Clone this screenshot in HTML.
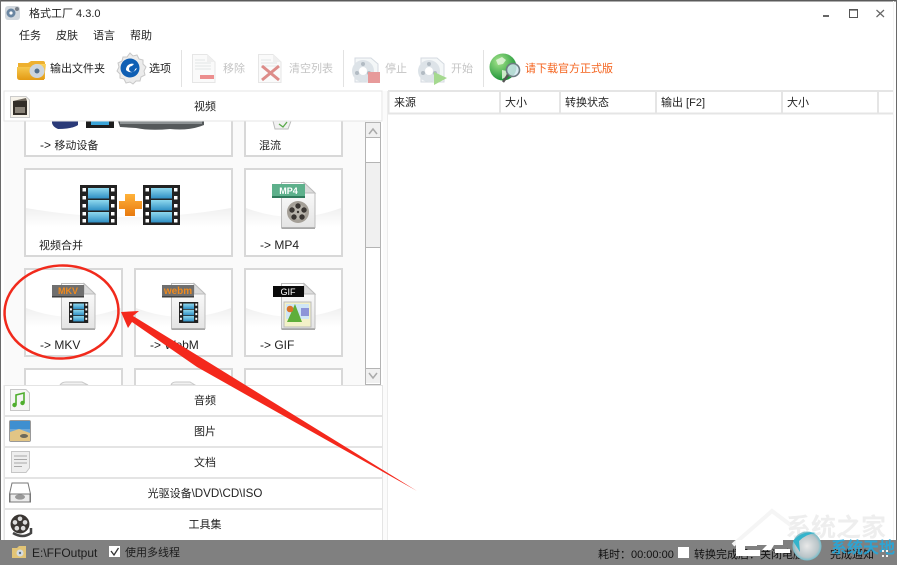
<!DOCTYPE html>
<html lang="zh-CN">
<head>
<meta charset="utf-8">
<title>格式工厂 4.3.0</title>
<style>
html,body{margin:0;padding:0;background:#fff}
#app{position:relative;width:897px;height:565px;overflow:hidden;background:#fff;font:11px/18px "Liberation Sans","Noto Sans CJK SC",sans-serif;color:#222}
#app>div.t{position:absolute;white-space:nowrap;margin-top:1px}
.c{transform:translateX(-50%)}
.g{color:#c4c4c4}
.l{font-size:12px}
svg{position:absolute;left:0;top:0}
</style>
</head>
<body>
<div id="app">
<svg width="897" height="565" viewBox="0 0 897 565">
<defs>
<linearGradient id="sw" x1="0" y1="0" x2="0" y2="1"><stop offset="0" stop-color="#f0f0f0"/><stop offset=".8" stop-color="#fff"/></linearGradient>
<linearGradient id="fb" x1="0" y1="0" x2="0" y2="1"><stop offset="0" stop-color="#8fd8ee"/><stop offset="1" stop-color="#2f8fc4"/></linearGradient>
<linearGradient id="pl" x1="0" y1="0" x2="0" y2="1"><stop offset="0" stop-color="#ffb23a"/><stop offset="1" stop-color="#e87a10"/></linearGradient>
<linearGradient id="dc" x1="0" y1="0" x2="0" y2="1"><stop offset="0" stop-color="#fff"/><stop offset="1" stop-color="#e4e4e4"/></linearGradient>
<linearGradient id="fo" x1="0" y1="0" x2="0" y2="1"><stop offset="0" stop-color="#fbd35c"/><stop offset="1" stop-color="#e39a14"/></linearGradient>
<radialGradient id="gl" cx=".35" cy=".3" r=".8"><stop offset="0" stop-color="#a6e58c"/><stop offset="1" stop-color="#0b8a2c"/></radialGradient>
<radialGradient id="ba" cx=".5" cy=".5" r=".6"><stop offset="0" stop-color="#e8e8e8"/><stop offset=".65" stop-color="#b9c4c8"/><stop offset="1" stop-color="#35b6cc"/></radialGradient>
<g id="film">
<rect width="16" height="20" fill="#222"/>
<rect x="3.5" y="1.5" width="9" height="5.2" fill="url(#fb)"/><rect x="3.5" y="7.4" width="9" height="5.2" fill="url(#fb)"/><rect x="3.5" y="13.3" width="9" height="5.2" fill="url(#fb)"/>
<g fill="#fff"><rect x=".8" y="1.5" width="1.6" height="2"/><rect x=".8" y="6" width="1.6" height="2"/><rect x=".8" y="10.5" width="1.6" height="2"/><rect x=".8" y="15" width="1.6" height="2"/><rect x="13.6" y="1.5" width="1.6" height="2"/><rect x="13.6" y="6" width="1.6" height="2"/><rect x="13.6" y="10.5" width="1.6" height="2"/><rect x="13.6" y="15" width="1.6" height="2"/></g>
</g>
<g id="bigfilm">
<rect width="37" height="40" fill="#222"/>
<rect x="8" y="3" width="21" height="10.5" fill="url(#fb)"/><rect x="8" y="15" width="21" height="10.5" fill="url(#fb)"/><rect x="8" y="27" width="21" height="10.5" fill="url(#fb)"/>
<g fill="#fff"><rect x="2.5" y="3" width="3.5" height="3.5"/><rect x="2.5" y="11" width="3.5" height="3.5"/><rect x="2.5" y="19" width="3.5" height="3.5"/><rect x="2.5" y="27" width="3.5" height="3.5"/><rect x="2.5" y="34" width="3.5" height="3.5"/><rect x="31" y="3" width="3.5" height="3.5"/><rect x="31" y="11" width="3.5" height="3.5"/><rect x="31" y="19" width="3.5" height="3.5"/><rect x="31" y="27" width="3.5" height="3.5"/><rect x="31" y="34" width="3.5" height="3.5"/></g>
</g>
<g id="doc">
<path d="M.5 .5H23L34 11V45.5H.5Z" fill="url(#dc)" stroke="#bdbdbd"/>
<path d="M23 .5V11H34Z" fill="#dcdcdc" stroke="#bdbdbd"/>
<rect x=".5" y="45.5" width="33.5" height="1.5" fill="#a8a8a8"/>
</g>
<g id="reel" opacity=".6">
<path d="M5 3H21L28 9V27H5Z" fill="#eef2f5" stroke="#b8c2cc"/>
<circle cx="13" cy="16" r="11" fill="#c8d2da"/>
<circle cx="13" cy="16" r="4" fill="#fff"/>
<circle cx="13" cy="9" r="2" fill="#7f8f9c"/><circle cx="7" cy="18" r="2" fill="#7f8f9c"/><circle cx="19" cy="18" r="2" fill="#7f8f9c"/>
</g>
<g id="rw" fill="#2d2a28">
<circle r="9" fill="#3a3633"/><circle cx="0" cy="-5" r="2.2" fill="#ddd"/><circle cx="4.8" cy="-1.5" r="2.2" fill="#ddd"/><circle cx="3" cy="4" r="2.2" fill="#ddd"/><circle cx="-3" cy="4" r="2.2" fill="#ddd"/><circle cx="-4.8" cy="-1.5" r="2.2" fill="#ddd"/>
</g>
</defs>

<!-- window frame -->
<rect x="0" y="0" width="897" height="1.5" fill="#5a5a5a"/>
<rect x="0" y="0" width="1" height="565" fill="#6a6a6a"/>
<rect x="896" y="0" width="1" height="565" fill="#6a6a6a"/>

<!-- app icon -->
<rect x="5" y="6" width="15" height="14" rx="3" fill="#d2d8de"/><circle cx="11" cy="13" r="4.5" fill="#6a86a2"/><circle cx="11" cy="13" r="1.6" fill="#fff"/><circle cx="17" cy="9" r="2" fill="#7a8088"/>

<!-- window controls -->
<rect x="823" y="15" width="6" height="2" fill="#666"/>
<rect x="849.5" y="9.5" width="8" height="8" fill="none" stroke="#555" stroke-width="1"/><rect x="849" y="9" width="9" height="1.6" fill="#555"/>
<path d="M876.5 10L884 17M884 10L876.5 17" stroke="#666" stroke-width="1.2" fill="none"/>

<!-- toolbar separators -->
<g fill="#e2e2e2"><rect x="181" y="50" width="1" height="37"/><rect x="343" y="50" width="1" height="37"/><rect x="483" y="50" width="1" height="37"/></g>

<!-- folder -->
<path d="M18 63H28L31 61H43Q45 61 45 63V79H18Z" fill="#eeb02f"/>
<path d="M17 67H32L35 64H46L44 80H20Q17 80 17 77Z" fill="url(#fo)"/>
<ellipse cx="37" cy="71" rx="7.5" ry="7" fill="#cdd5dc"/><circle cx="37" cy="71" r="2.5" fill="#53708c"/>
<!-- gear -->
<path d="M130 53l3 3 4-1 2 4 4 1 0 4 3 3-2 4 1 4-4 2-1 4-4 0-3 3-3-2-4 1-2-4-4-1 0-4-3-3 2-4-1-4 4-2 1-4 4 0z" fill="#ececec" stroke="#c8c8c8"/>
<circle cx="130" cy="68" r="9.5" fill="#0f5fb4"/><path d="M126 70a6 6 0 0 1 8-6l-2 2a3 3 0 1 0 3 3l2-1a6.5 6.5 0 0 1-11 2z" fill="#fff"/>
<!-- remove -->
<g transform="translate(192,54)" opacity=".55"><path d="M.5 .5H15L23 8V28.5H.5Z" fill="#f6f6f6" stroke="#d2d2d2"/><path d="M15 .5V8H23Z" fill="#e2e2e2"/><path d="M3 6H13M3 9H19M3 12H19M3 15H19" stroke="#c9d1d1"/><rect x="8" y="21" width="14" height="4" fill="#d33"/></g>
<!-- clear -->
<g transform="translate(258,54)" opacity=".55"><path d="M.5 .5H15L23 8V28.5H.5Z" fill="#f6f6f6" stroke="#d2d2d2"/><path d="M15 .5V8H23Z" fill="#e2e2e2"/><path d="M3 6H13M3 9H19M3 12H19" stroke="#c9d1d1"/><path d="M4 12L21 26M21 12L4 26" stroke="#c2302a" stroke-width="3"/></g>
<!-- stop / start -->
<use href="#reel" transform="translate(350,55)"/><rect x="368" y="72" width="12" height="11" fill="#e79a9a"/>
<use href="#reel" transform="translate(416,55)"/><path d="M434 72L447 78L434 85Z" fill="#a5d98f"/>
<!-- globe -->
<circle cx="503" cy="67" r="13.5" fill="url(#gl)"/><path d="M496 60l6-3 4 3-3 4-5 1zM502 70l5 1-1 6-4 2z" fill="#e4f5dd" opacity=".85"/>
<circle cx="513" cy="70" r="6.5" fill="#cfe6ef" fill-opacity=".85" stroke="#6d7c82" stroke-width="1.6"/><path d="M508 75L503 82" stroke="#555" stroke-width="2.4"/>

<!-- left panel background -->
<rect x="4" y="121" width="362" height="264" fill="#fafafa"/>

<!-- tiles -->
<g fill="#fff" stroke="#d8d8d8" stroke-width="2">
<rect x="25" y="110" width="207" height="46"/><rect x="245" y="110" width="97" height="46"/>
<rect x="25" y="169" width="207" height="87"/><rect x="245" y="169" width="97" height="87"/>
<rect x="25" y="269" width="97" height="87"/><rect x="135" y="269" width="97" height="87"/><rect x="245" y="269" width="97" height="87"/>
<rect x="25" y="369" width="97" height="40"/><rect x="135" y="369" width="97" height="40"/><rect x="245" y="369" width="97" height="40"/>
</g>
<g fill="url(#sw)">
<path d="M26 208Q128 226 231 208V232H26Z"/><path d="M246 208Q293 226 341 208V232H246Z"/>
<path d="M26 308Q73 326 121 308V332H26Z"/><path d="M136 308Q183 326 231 308V332H136Z"/><path d="M246 308Q293 326 341 308V332H246Z"/>
</g>

<!-- top partial tile icons -->
<path d="M52 121H78V125Q72 129 58 129Q53 127 52 123Z" fill="#2a3a78"/>
<rect x="86" y="121" width="28" height="7" fill="#1d1d1d"/><rect x="91" y="121" width="18" height="4" fill="#3aa4d8"/>
<path d="M118 121H204V125Q190 131 170 129Q150 131 136 128L120 127Z" fill="#55595b"/><path d="M120 121H202V124H120Z" fill="#8d9294"/>
<path d="M273 121H291L288 129H275Z" fill="#f1f1f1" stroke="#bbb"/><path d="M279 124L283 127L287 122" stroke="#5aa84a" stroke-width="1.3" fill="none"/>

<!-- merge -->
<use href="#bigfilm" transform="translate(80,185)"/>
<use href="#bigfilm" transform="translate(143,185)"/>
<path d="M125 194H135V201H142V209H135V216H125V209H119V201H125Z" fill="url(#pl)"/>

<!-- mp4 -->
<use href="#doc" transform="translate(281,182)"/>
<rect x="272" y="184" width="33" height="12" fill="#5db08b"/><rect x="272" y="196" width="33" height="2" fill="#2f7a5b"/>
<text x="288.5" y="194" font-family="Liberation Sans" font-weight="bold" font-size="9" fill="#fff" text-anchor="middle">MP4</text>
<circle cx="298" cy="212" r="11" fill="#a49f97"/><circle cx="298" cy="212" r="7.5" fill="#b8b4ac"/>
<g fill="#3a3633"><circle cx="298" cy="206" r="2.7"/><circle cx="304" cy="210" r="2.7"/><circle cx="302" cy="217" r="2.7"/><circle cx="294" cy="217" r="2.7"/><circle cx="292" cy="210" r="2.7"/><circle cx="298" cy="212" r="1.2"/></g>

<!-- mkv -->
<use href="#doc" transform="translate(61,283)"/>
<rect x="52" y="285" width="32" height="12" fill="#6f6f6f"/><rect x="52" y="296" width="32" height="1.5" fill="#3f3f3f"/>
<text x="68" y="294" font-family="Liberation Sans" font-weight="bold" font-size="9" fill="#f08a1d" text-anchor="middle">MKV</text>
<use href="#film" transform="translate(69,302) scale(1.2,1.05)"/>

<!-- webm -->
<use href="#doc" transform="translate(171,283)"/>
<rect x="162" y="285" width="32" height="12" fill="#6f6f6f"/><rect x="162" y="296" width="32" height="1.5" fill="#3f3f3f"/>
<text x="178" y="294" font-family="Liberation Sans" font-weight="bold" font-size="10" fill="#f08a1d" text-anchor="middle">webm</text>
<use href="#film" transform="translate(179,302) scale(1.2,1.05)"/>

<!-- gif -->
<use href="#doc" transform="translate(281,283)"/>
<rect x="273" y="286" width="31" height="11" fill="#0a0a0a"/>
<text x="288" y="295" font-family="Liberation Sans" font-size="9" fill="#fff" text-anchor="middle">GIF</text>
<rect x="284" y="302" width="27" height="25" fill="#f3f1c8" stroke="#bbb"/><rect x="286" y="304" width="23" height="15" fill="#cfe6f6"/>
<rect x="301" y="308" width="8" height="8" fill="#8c94d8"/>
<path d="M287 322L295 304L302 322Z" fill="#5fae3a"/><circle cx="290" cy="309" r="3.3" fill="#d9742a"/>

<!-- row 4 doc tops -->
<path d="M60 385Q62 382 66 382H82L88 385Z" fill="#f1f1f1" stroke="#c9c9c9"/>
<path d="M171 385Q172 382 176 382H190L195 385Z" fill="#f1f1f1" stroke="#c9c9c9"/>

<!-- scrollbar -->
<rect x="365.500" y="122.500" width="15" height="262" fill="#fff" stroke="#b4b4b4"/>
<rect x="366" y="123" width="14" height="14" fill="#f0f0f0"/><path d="M365 137.500H381" stroke="#b4b4b4"/>
<path d="M369 134L373 129L377 134" stroke="#aaa" stroke-width="1.5" fill="none"/>
<rect x="366" y="162" width="14" height="85" fill="#f0f0f0"/><path d="M365 162.500H381M365 247.500H381" stroke="#b4b4b4"/>
<rect x="366" y="369" width="14" height="14" fill="#f0f0f0"/><path d="M365 368.500H381" stroke="#b4b4b4"/>
<path d="M369 373L373 378L377 373" stroke="#aaa" stroke-width="1.5" fill="none"/>

<!-- panel bars -->
<rect x="4" y="91" width="378" height="30" fill="#fff" stroke="#e4e4e4"/>
<rect x="4.500" y="385.500" width="378" height="30" fill="#fff" stroke="#e4e4e4"/>
<rect x="4.500" y="416.500" width="378" height="30" fill="#fff" stroke="#e4e4e4"/>
<rect x="4.500" y="447.500" width="378" height="30" fill="#fff" stroke="#e4e4e4"/>
<rect x="4.500" y="478.500" width="378" height="30" fill="#fff" stroke="#e4e4e4"/>
<rect x="4.500" y="509.500" width="378" height="31" fill="#fff" stroke="#e4e4e4"/>
<path d="M4 385V540" stroke="#e4e4e4"/>
<rect x="383" y="91" width="5" height="449" fill="#fbfbfb"/><rect x="387" y="91" width="1" height="449" fill="#ececec"/>

<!-- bar icons -->
<g transform="translate(10,96)"><path d="M.5 .5H16L19.500 4V21.500H.5Z" fill="#f7f3ea" stroke="#ccc"/><rect x="3" y="5" width="14" height="14" fill="#332e28"/><path d="M3 5L16 2L17 5Z" fill="#6b645a"/><rect x="5" y="11" width="10" height="6" fill="#8a8378"/></g>
<g transform="translate(10,389)"><path d="M.5 .5H16L19.500 4V21.500H.5Z" fill="#f5f5f5" stroke="#c8c8c8"/><path d="M6 16V6L14 4V14" fill="none" stroke="#4fae2e" stroke-width="1.6"/><circle cx="4.500" cy="16" r="2.2" fill="#4fae2e"/><circle cx="12.500" cy="14" r="2.2" fill="#4fae2e"/></g>
<g transform="translate(9,420)"><rect x=".5" y=".5" width="21" height="21" rx="1.500" fill="#6ea8d8" stroke="#999"/><rect x="1" y="1" width="20" height="8" fill="#3f8fd0"/><path d="M1 12L10 9L21 13V21H1Z" fill="#e2c585"/><ellipse cx="15" cy="16" rx="4" ry="2" fill="#6d6a5c"/></g>
<g transform="translate(11,451)"><path d="M.5 .5H18.500V17L15 21.500H.5Z" fill="#eee" stroke="#c6c6c6"/><path d="M3 5H16M3 8.500H16M3 12H16M3 15.500H11" stroke="#a8a8a8"/></g>
<g transform="translate(9,482)"><path d="M3 1H19L21.500 12V20H.5V12Z" fill="#fff" stroke="#777"/><path d="M1 12H21V20H1Z" fill="#ececec" stroke="#777"/><ellipse cx="11" cy="15" rx="5" ry="2.600" fill="#999"/></g>
<g transform="translate(20,524)"><use href="#rw" transform="scale(1.050)"/><path d="M-7 9Q3 15 11 9L11 4" fill="none" stroke="#444" stroke-width="2.500"/></g>

<!-- right list header -->
<rect x="388" y="90" width="506" height="2" fill="#e5e5e5"/>
<rect x="388" y="112.500" width="506" height="2" fill="#e5e5e5"/>
<g fill="#e5e5e5"><rect x="388" y="90" width="1.500" height="24"/><rect x="499" y="90" width="2" height="24"/><rect x="559" y="90" width="2" height="24"/><rect x="655" y="90" width="2" height="24"/><rect x="781" y="90" width="2" height="24"/><rect x="877" y="90" width="2" height="24"/></g>
<rect x="893" y="1" width="1" height="539" fill="#f4f4f4"/>

<!-- status bar -->
<rect x="0" y="540" width="897" height="25" fill="#808080"/>
<path d="M12 548H17L19 546H26V558H12Z" fill="#e2c476"/><circle cx="20" cy="553" r="3.500" fill="#d5dbe0"/><circle cx="20" cy="553" r="1.200" fill="#56708a"/>
<rect x="109" y="546" width="11" height="11" fill="#fff"/><path d="M111 551L114 555L118.500 548" stroke="#333" stroke-width="1.300" fill="none"/>
<rect x="678" y="547" width="11" height="11" fill="#fff"/>
</svg>

<div class="t" style="left:29px;top:4px;">格式工厂 4.3.0</div>
<div class="t" style="left:19px;top:26px;">任务</div>
<div class="t" style="left:56px;top:26px;">皮肤</div>
<div class="t" style="left:93px;top:26px;">语言</div>
<div class="t" style="left:130px;top:26px;">帮助</div>
<div class="t" style="left:50px;top:59px;">输出文件夹</div>
<div class="t" style="left:149px;top:59px;">选项</div>
<div class="t g" style="left:223px;top:59px;">移除</div>
<div class="t g" style="left:289px;top:59px;">清空列表</div>
<div class="t g" style="left:385px;top:59px;">停止</div>
<div class="t g" style="left:451px;top:59px;">开始</div>
<div class="t" style="left:525px;top:59px;color:#f4631d;">请下载官方正式版</div>

<div class="t c" style="left:205px;top:97px;">视频</div>
<div class="t" style="left:40px;top:135px;"><span class="l">-&gt; </span>移动设备</div>
<div class="t" style="left:259px;top:136px;">混流</div>
<div class="t" style="left:39px;top:236px;">视频合并</div>
<div class="t l" style="left:260px;top:235px;">-&gt; MP4</div>
<div class="t l" style="left:40px;top:335px;">-&gt; MKV</div>
<div class="t l" style="left:150px;top:335px;">-&gt; WebM</div>
<div class="t l" style="left:260px;top:335px;">-&gt; GIF</div>

<div class="t c" style="left:205px;top:391px;">音频</div>
<div class="t c" style="left:205px;top:422px;">图片</div>
<div class="t c" style="left:205px;top:453px;">文档</div>
<div class="t c" style="left:205px;top:484px;">光驱设备<span style="font-size:11.6px">\DVD\CD\ISO</span></div>
<div class="t c" style="left:205px;top:515px;">工具集</div>

<div class="t" style="left:394px;top:93px;">来源</div>
<div class="t" style="left:505px;top:93px;">大小</div>
<div class="t" style="left:565px;top:93px;">转换状态</div>
<div class="t" style="left:661px;top:93px;">输出 [F2]</div>
<div class="t" style="left:787px;top:93px;">大小</div>

<div class="t" style="left:32px;top:543px;font-size:12px;color:#1c1c1c;">E:\FFOutput</div>
<div class="t" style="left:125px;top:543px;color:#1c1c1c;">使用多线程</div>
<div class="t" style="left:598px;top:545px;color:#111;">耗时：00:00:00</div>
<div class="t" style="left:694px;top:545px;color:#111;">转换完成后：关闭电脑</div>
<div class="t" style="left:830px;top:545px;color:#111;">完成通知</div>

<!-- watermark -->
<svg width="897" height="565" viewBox="0 0 897 565">
<path d="M733 545L772 511L792 526" fill="none" stroke="#f5f5f5" stroke-width="4"/>
<path d="M736 540H757V546H745V550H760V556H736Z" fill="#fff"/>
<path d="M757 540H783V545H774L771 550H762L767 545H757Z" fill="#fff"/>
<rect x="775" y="549" width="15" height="4" fill="#fff"/>
<text x="786" y="536" font-family="Noto Sans CJK SC, sans-serif" font-size="25" font-weight="bold" fill="#eeeeee">系统之家</text>
<circle cx="807" cy="546" r="14.500" fill="url(#ba)"/>
<path d="M793 541Q802 530 816 533Q806 534 799 541L800 552Z" fill="#33b4cc"/>
<text x="831" y="553" font-family="Noto Sans CJK SC, sans-serif" font-size="16" font-weight="bold" fill="#25a8dc" opacity=".9" textLength="64">系统天地</text>
<g fill="#f2f2f2"><rect x="882" y="550" width="2" height="2"/><rect x="886" y="550" width="2" height="2"/><rect x="882" y="555" width="2" height="2"/><rect x="886" y="555" width="2" height="2"/></g>
<!-- red annotation -->
<ellipse cx="61.500" cy="312" rx="57" ry="46.500" fill="none" stroke="#f12a1c" stroke-width="2.500" transform="rotate(-3 61.500 312)"/>
<path d="M121 312L139 311L133 316L200 357L417 491L197 367L132 322L128 328Z" fill="#f4281c"/>
</svg>
</div>
</body>
</html>
